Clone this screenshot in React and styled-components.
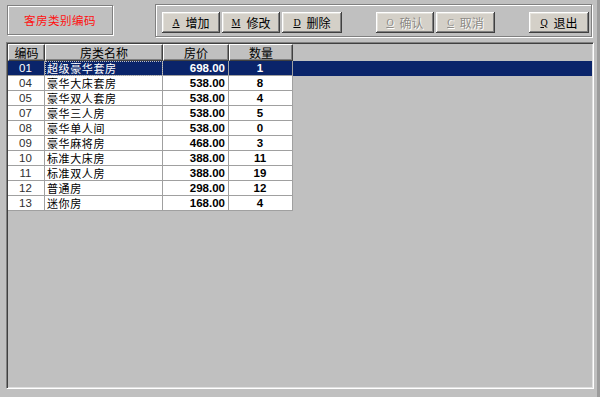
import React from "react";
import styled, { createGlobalStyle } from "styled-components";

const GlobalStyle = createGlobalStyle`
  html, body {
    margin: 0;
    padding: 0;
    background: #c0c0c0;
    overflow: hidden;
  }
  * {
    box-sizing: border-box;
  }
`;

const Window = styled.div`
  width: 600px;
  height: 397px;
  background: #c0c0c0;
  border-right: 3px solid #9c9c9c;
  font-family: "Liberation Sans", "Noto Sans CJK SC", sans-serif;
  font-size: 12px;
  color: #000;
  display: flex;
  flex-direction: column;
`;

const TopBar = styled.div`
  display: flex;
  align-items: flex-start;
  height: 38px;
  padding: 4px 0 0 7px;
`;

const Etched = styled.div`
  border: 1px solid #808080;
  box-shadow: inset 1px 1px #ffffff, 1px 1px #ffffff;
`;

const TitleBox = styled(Etched)`
  width: 106px;
  height: 30px;
  margin-top: 1px;
  display: flex;
  align-items: center;
  justify-content: center;
  color: #ff1010;
  font-family: "Noto Sans CJK SC", sans-serif;
  font-size: 11.5px;
  line-height: 14px;
  letter-spacing: 0.5px;
`;

const ButtonPanel = styled(Etched)`
  width: 437px;
  height: 33px;
  margin-left: 42px;
  display: flex;
  align-items: flex-start;
  padding: 7px 0 0 6px;
`;

const Button = styled.button`
  width: ${(p) => p.$w || 58}px;
  height: 21px;
  margin-left: ${(p) => p.$gap || 0}px;
  padding: 0;
  border: none;
  background: #d4d0c8;
  box-shadow: inset -1px -1px #404040, inset 1px 1px #ffffff,
    inset -2px -2px #808080, inset 2px 2px #e4e2dc;
  display: flex;
  align-items: center;
  justify-content: center;
  gap: 6px;
  font-family: "Noto Sans CJK SC", sans-serif;
  font-size: 12px;
  line-height: 14px;
  color: ${(p) => (p.disabled ? "#8c8a86" : "#000")};
  text-shadow: ${(p) => (p.disabled ? "1px 1px #ffffff" : "none")};
`;

const Key = styled.span`
  font-family: "Liberation Serif", serif;
  font-size: 10px;
  text-decoration: underline;
`;

const Grid = styled.div`
  width: 588px;
  height: 347px;
  margin: 4px 0 0 6px;
  border-top: 1px solid #808080;
  border-left: 1px solid #808080;
  border-bottom: 1px solid #ffffff;
  border-right: 1px solid #ffffff;
  box-shadow: inset 1px 1px #404040, inset -1px -1px #dfdfdf;
  padding: 1px;
  display: flex;
  flex-direction: column;
`;

const HeaderRow = styled.div`
  display: flex;
  height: 17px;
  flex-shrink: 0;
`;

const HeaderCell = styled.div`
  width: ${(p) => p.$w}px;
  height: 17px;
  background: #c0c0c0;
  border-top: 1px solid #ffffff;
  border-left: 1px solid #ffffff;
  border-right: 1px solid #404040;
  border-bottom: 1px solid #404040;
  box-shadow: inset -1px -1px #808080;
  display: flex;
  align-items: center;
  justify-content: center;
  font-family: "Noto Sans CJK SC", sans-serif;
  font-size: 12px;
  line-height: 13px;
  overflow: hidden;
`;

const Row = styled.div`
  display: flex;
  height: 15px;
  flex-shrink: 0;
`;

const Cell = styled.div`
  width: ${(p) => p.$w}px;
  height: 15px;
  background: ${(p) => (p.$sel ? "#0a246a" : "#ffffff")};
  color: ${(p) => (p.$sel ? "#ffffff" : p.$dim ? "#303030" : "#000")};
  border-right: 1px solid #a0a0a0;
  border-bottom: 1px solid #a0a0a0;
  display: flex;
  align-items: center;
  justify-content: ${(p) =>
    p.$align === "right" ? "flex-end" : p.$align === "left" ? "flex-start" : "center"};
  padding: 0 3px 0 2px;
  font-family: ${(p) =>
    p.$cjk ? '"Noto Sans CJK SC", sans-serif' : '"Liberation Sans", sans-serif'};
  font-weight: ${(p) => (p.$bold ? 700 : 400)};
  font-size: ${(p) => (p.$cjk ? "11px" : "11.5px")};
  letter-spacing: ${(p) => (p.$cjk ? "0.6px" : "0")};
  line-height: 12px;
  white-space: nowrap;
  overflow: hidden;
  outline: ${(p) => (p.$focus ? "1px dotted #c0c0c0" : "none")};
  outline-offset: -1px;
`;

const Filler = styled.div`
  flex: 1;
  height: 15px;
  background: ${(p) => (p.$sel ? "#0a246a" : "transparent")};
`;

const cols = [37, 118, 66, 64];

const rooms = [
  ["01", "超级豪华套房", "698.00", "1"],
  ["04", "豪华大床套房", "538.00", "8"],
  ["05", "豪华双人套房", "538.00", "4"],
  ["07", "豪华三人房", "538.00", "5"],
  ["08", "豪华单人间", "538.00", "0"],
  ["09", "豪华麻将房", "468.00", "3"],
  ["10", "标准大床房", "388.00", "11"],
  ["11", "标准双人房", "388.00", "19"],
  ["12", "普通房", "298.00", "12"],
  ["13", "迷你房", "168.00", "4"],
];

export default function App() {
  return (
    <>
      <GlobalStyle />
      <Window>
        <TopBar>
          <TitleBox>客房类别编码</TitleBox>
          <ButtonPanel>
            <Button><Key>A</Key>增加</Button>
            <Button $gap={2}><Key>M</Key>修改</Button>
            <Button $gap={2} $w={60}><Key>D</Key>删除</Button>
            <Button $gap={34} disabled><Key>O</Key>确认</Button>
            <Button $gap={2} $w={59} disabled><Key>C</Key>取消</Button>
            <Button $gap={34} $w={60}><Key>Q</Key>退出</Button>
          </ButtonPanel>
        </TopBar>
        <Grid>
          <HeaderRow>
            <HeaderCell $w={cols[0]}>编码</HeaderCell>
            <HeaderCell $w={cols[1]}>房类名称</HeaderCell>
            <HeaderCell $w={cols[2]}>房价</HeaderCell>
            <HeaderCell $w={cols[3]}>数量</HeaderCell>
          </HeaderRow>
          {rooms.map(([code, name, price, qty], i) => {
            const sel = i === 0;
            return (
              <Row key={code}>
                <Cell $w={cols[0]} $sel={sel} $dim>{code}</Cell>
                <Cell $w={cols[1]} $sel={sel} $focus={sel} $align="left" $cjk>
                  {name}
                </Cell>
                <Cell $w={cols[2]} $sel={sel} $align="right" $bold>{price}</Cell>
                <Cell $w={cols[3]} $sel={sel} $bold>{qty}</Cell>
                <Filler $sel={sel} />
              </Row>
            );
          })}
        </Grid>
      </Window>
    </>
  );
}
